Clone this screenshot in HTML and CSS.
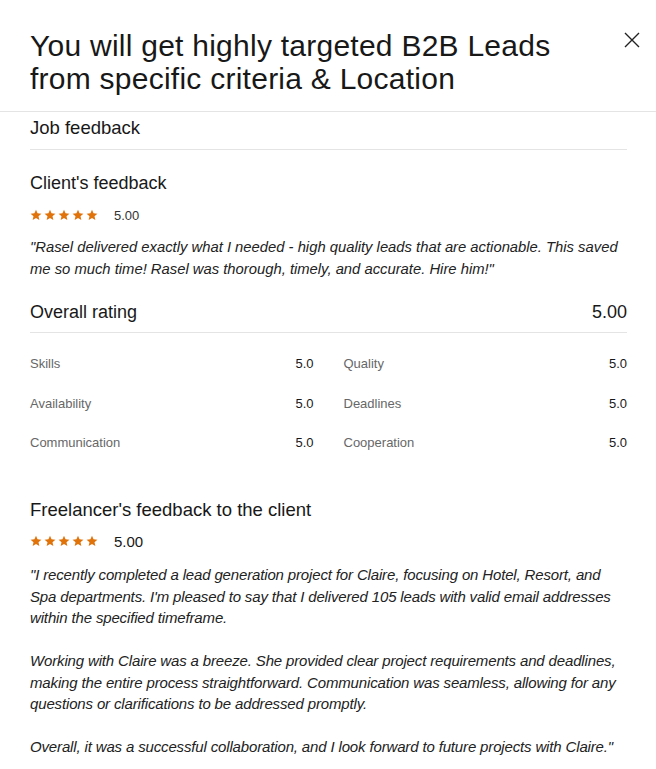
FILE: index.html
```html
<!DOCTYPE html>
<html lang="en">
<head>
  <meta charset="UTF-8">
  <meta name="viewport" content="width=device-width, initial-scale=1.0">
  <title>Job feedback</title>
  <link rel="stylesheet" href="styles.css">
</head>
<body>
  <div class="modal">
    <div class="modal-header">
      <h1 class="modal-title">You will get highly targeted B2B Leads from specific criteria &amp; Location</h1>
      <button class="close-button" aria-label="Close">
        <svg width="16" height="16" viewBox="0 0 16 16"><path d="M1 1 L15 15 M15 1 L1 15" stroke="#222" stroke-width="1.4" fill="none"/></svg>
      </button>
    </div>
    <div class="modal-body">
      <div class="section-title">Job feedback</div>

      <h2 class="feedback-title">Client's feedback</h2>
      <div class="rating-row">
        <div class="stars" data-stars="5"></div>
        <span class="rating-value">5.00</span>
      </div>
      <p class="feedback-text">"Rasel delivered exactly what I needed - high quality leads that are actionable. This saved me so much time! Rasel was thorough, timely, and accurate. Hire him!"</p>

      <div class="overall">
        <span>Overall rating</span>
        <span>5.00</span>
      </div>
      <div class="scores">
        <div class="score"><span class="score-label">Skills</span><span>5.0</span></div>
        <div class="score"><span class="score-label">Quality</span><span>5.0</span></div>
        <div class="score"><span class="score-label">Availability</span><span>5.0</span></div>
        <div class="score"><span class="score-label">Deadlines</span><span>5.0</span></div>
        <div class="score"><span class="score-label">Communication</span><span>5.0</span></div>
        <div class="score"><span class="score-label">Cooperation</span><span>5.0</span></div>
      </div>

      <h2 class="feedback-title freelancer">Freelancer's feedback to the client</h2>
      <div class="rating-row freelancer">
        <div class="stars" data-stars="5"></div>
        <span class="rating-value large">5.00</span>
      </div>
      <p class="feedback-text freelancer">"I recently completed a lead generation project for Claire, focusing on Hotel, Resort, and Spa departments. I'm pleased to say that I delivered 105 leads with valid email addresses within the specified timeframe.<br><br>Working with Claire was a breeze. She provided clear project requirements and deadlines, making the entire process straightforward. Communication was seamless, allowing for any questions or clarifications to be addressed promptly.<br><br>Overall, it was a successful collaboration, and I look forward to future projects with Claire."</p>
    </div>
  </div>
  <script>
    // Fill star ratings
    const starSvg = '<svg width="12" height="12" viewBox="0 0 24 24"><path d="M12 1.5l3.1 7.1 7.7.7-5.8 5.1 1.7 7.6L12 18.1 5.3 22l1.7-7.6L1.2 9.3l7.7-.7z" fill="#e1730b"/></svg>';
    document.querySelectorAll('.stars').forEach(el => {
      const count = parseInt(el.getAttribute('data-stars'), 10);
      el.innerHTML = starSvg.repeat(count);
    });
  </script>
</body>
</html>
```

FILE: styles.css
```css
body {
  margin: 0;
  padding: 0;
  background-color: #fff;
  color: #181818;
  font-family: "Liberation Sans", Arial, sans-serif;
}
.modal {
  background-color: #fff;
  border-top-left-radius: 8px;
}
.modal-header {
  display: flex;
  align-items: flex-start;
  justify-content: space-between;
  padding: 29px 16px 16px 30px;
  border-bottom: 1px solid #e4e4e4;
}
.modal-title {
  margin: 0;
  font-size: 30px;
  font-weight: 400;
  line-height: 33px;
  letter-spacing: 0.25px;
  max-width: 540px;
}
.close-button {
  background: none;
  border: none;
  padding: 0;
  margin-top: 3px;
  cursor: pointer;
}
.modal-body {
  padding: 0 29px 0 30px;
}
.section-title {
  font-size: 18.5px;
  line-height: 22px;
  padding: 5px 0 10px;
  border-bottom: 1px solid #e4e4e4;
}
.feedback-title {
  margin: 21px 0 0;
  font-size: 18px;
  font-weight: 400;
  line-height: 24px;
}
.feedback-title.freelancer {
  margin-top: 45px;
  font-size: 18.5px;
}
.rating-row {
  display: flex;
  align-items: center;
  gap: 16px;
  margin-top: 10px;
  height: 20px;
}
.rating-row.freelancer {
  margin-top: 9px;
}
.stars {
  display: flex;
  gap: 2px;
}
.rating-value {
  font-size: 13px;
  color: #333;
}
.rating-value.large {
  font-size: 15px;
  color: #181818;
}
.feedback-text {
  margin: 11px 0 0;
  font-size: 14.8px;
  font-style: italic;
  line-height: 22px;
  color: #222;
}
.feedback-text.freelancer {
  margin-top: 13px;
  font-size: 15px;
  line-height: 21.5px;
  letter-spacing: -0.15px;
}
.overall {
  display: flex;
  justify-content: space-between;
  font-size: 18px;
  line-height: 24px;
  margin-top: 20px;
  padding-bottom: 8px;
  border-bottom: 1px solid #e4e4e4;
}
.scores {
  display: grid;
  grid-template-columns: 1fr 1fr;
  column-gap: 30px;
  row-gap: 19.5px;
  margin-top: 21px;
}
.score {
  display: flex;
  justify-content: space-between;
  font-size: 13px;
  line-height: 20px;
}
.score-label {
  color: #676767;
}
```
